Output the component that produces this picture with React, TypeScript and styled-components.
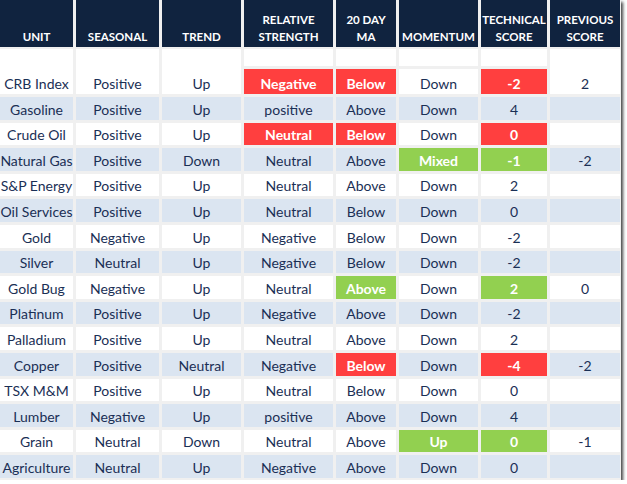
import styled, { createGlobalStyle } from 'styled-components';

const Global = createGlobalStyle`
  html, body {
    margin: 0;
    padding: 0;
    background: #ffffff;
  }
`;

type Tone = 'white' | 'blue' | 'red' | 'green';

const bg: Record<Tone, string> = {
  white: '#ffffff',
  blue: '#dbe5f1',
  red: '#ff3f3f',
  green: '#92d050',
};

const Frame = styled.div`
  width: 620px;
  padding: 0 1px 2px 0;
  background: #f0f0f0;
  box-shadow: 2px 2px 3px rgba(0, 0, 0, 0.75);
`;

const Grid = styled.div`
  display: grid;
  grid-template-columns: 73px 83px 79px 89px 60px 79px 66px 70px;
  grid-template-rows: 46px 17px 25px repeat(15, 22.6px);
  column-gap: 3px;
  row-gap: 3px;
  font-family: Lato, 'Liberation Sans', sans-serif;
`;

const Head = styled.div`
  background: #10233f;
  color: #ffffff;
  font-weight: 700;
  font-size: 11.5px;
  line-height: 17px;
  text-align: center;
  display: flex;
  align-items: flex-end;
  justify-content: center;
  padding-bottom: 2px;
  box-sizing: border-box;
  margin-bottom: -1px;
  white-space: pre-line;
`;

const Cell = styled.div<{ $tone: Tone; $tall?: boolean }>`
  background: ${(p) => bg[p.$tone]};
  color: ${(p) => (p.$tone === 'red' || p.$tone === 'green' ? '#ffffff' : '#1a2f55')};
  font-weight: ${(p) => (p.$tone === 'red' || p.$tone === 'green' ? 700 : 400)};
  font-size: 14px;
  line-height: 18px;
  white-space: nowrap;
  display: flex;
  align-items: flex-end;
  justify-content: center;
  padding-bottom: 1px;
  box-sizing: border-box;
  grid-row: ${(p) => (p.$tall ? 'span 2' : 'auto')};
`;

const headers = [
  'UNIT',
  'SEASONAL',
  'TREND',
  'RELATIVE\nSTRENGTH',
  '20 DAY\nMA',
  'MOMENTUM',
  'TECHNICAL\nSCORE',
  'PREVIOUS\nSCORE',
];

// [unit, seasonal, trend, rs, ma, momentum, tech, prev] ; r = red, g = green
const rows: string[][] = [
  ['CRB Index', 'Positive', 'Up', 'Negative|r', 'Below|r', 'Down', '-2|r', '2'],
  ['Gasoline', 'Positive', 'Up', 'positive', 'Above', 'Down', '4', ''],
  ['Crude Oil', 'Positive', 'Up', 'Neutral|r', 'Below|r', 'Down', '0|r', ''],
  ['Natural Gas', 'Positive', 'Down', 'Neutral', 'Above', 'Mixed|g', '-1|g', '-2'],
  ['S&P Energy', 'Positive', 'Up', 'Neutral', 'Above', 'Down', '2', ''],
  ['Oil Services', 'Positive', 'Up', 'Neutral', 'Below', 'Down', '0', ''],
  ['Gold', 'Negative', 'Up', 'Negative', 'Below', 'Down', '-2', ''],
  ['Silver', 'Neutral', 'Up', 'Negative', 'Below', 'Down', '-2', ''],
  ['Gold Bug', 'Negative', 'Up', 'Neutral', 'Above|g', 'Down', '2|g', '0'],
  ['Platinum', 'Positive', 'Up', 'Negative', 'Above', 'Down', '-2', ''],
  ['Palladium', 'Positive', 'Up', 'Neutral', 'Above', 'Down', '2', ''],
  ['Copper', 'Positive', 'Neutral', 'Negative', 'Below|r', 'Down', '-4|r', '-2'],
  ['TSX M&M', 'Positive', 'Up', 'Neutral', 'Below', 'Down', '0', ''],
  ['Lumber', 'Negative', 'Up', 'positive', 'Above', 'Down', '4', ''],
  ['Grain', 'Neutral', 'Down', 'Neutral', 'Above', 'Up|g', '0|g', '-1'],
  ['Agriculture', 'Neutral', 'Up', 'Negative', 'Above', 'Down', '0', ''],
];

const parse = (v: string, base: Tone): [string, Tone] => {
  const [text, flag] = v.split('|');
  if (flag === 'r') return [text, 'red'];
  if (flag === 'g') return [text, 'green'];
  return [text, base];
};

const App = () => {
  return (
    <>
      <Global />
      <Frame>
        <Grid>
          {headers.map((h) => (
            <Head key={h}>{h}</Head>
          ))}
          {rows.map((row, i) => {
            const base: Tone = i % 2 === 1 ? 'blue' : 'white';
            if (i === 0) {
              // first row: outer columns span the blank spacer row
              return [
                ...row.slice(0, 3).map((v, j) => {
                  const [t, tone] = parse(v, base);
                  return (
                    <Cell key={`a${j}`} $tone={tone} $tall>
                      {t}
                    </Cell>
                  );
                }),
                ...[3, 4, 5, 6].map((j) => <Cell key={`s${j}`} $tone="white" />),
                (() => {
                  const [t, tone] = parse(row[7], base);
                  return (
                    <Cell key="a7" $tone={tone} $tall>
                      {t}
                    </Cell>
                  );
                })(),
                ...row.slice(3, 7).map((v, j) => {
                  const [t, tone] = parse(v, base);
                  return (
                    <Cell key={`b${j}`} $tone={tone}>
                      {t}
                    </Cell>
                  );
                }),
              ];
            }
            return row.map((v, j) => {
              const [t, tone] = parse(v, base);
              return (
                <Cell key={`${i}-${j}`} $tone={tone}>
                  {t}
                </Cell>
              );
            });
          })}
        </Grid>
      </Frame>
    </>
  );
};

export default App;
